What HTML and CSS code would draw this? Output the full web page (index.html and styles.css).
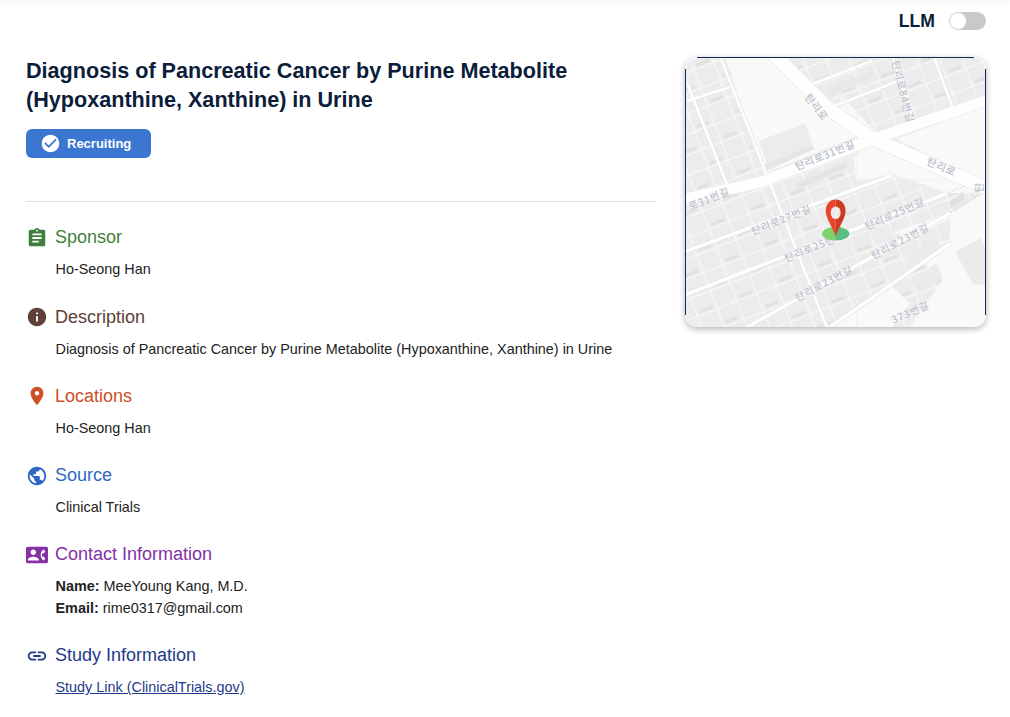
FILE: index.html
```html
<!DOCTYPE html>
<html lang="en">
<head>
<meta charset="utf-8">
<title>Study detail</title>
<link rel="stylesheet" href="styles.css">
</head>
<body>
<div class="top-shadow"></div>
<header class="toolbar">
  <span class="llm-label">LLM</span>
  <span class="switch"><span class="switch-thumb"></span></span>
</header>
<main class="layout">
  <section class="details">
    <h1 class="title">Diagnosis of Pancreatic Cancer by Purine Metabolite (Hypoxanthine, Xanthine) in Urine</h1>
    <div class="badge">
      <svg class="badge-icon" viewBox="0 0 24 24"><path fill="#fff" d="M12 2C6.48 2 2 6.48 2 12s4.48 10 10 10 10-4.48 10-10S17.52 2 12 2zm-2 15l-5-5 1.41-1.41L10 14.17l7.59-7.59L19 8l-9 9z"/></svg>
      <span>Recruiting</span>
    </div>
    <hr class="divider">

    <div class="info">
      <h2 class="info-head c-green"><svg class="icon" viewBox="0 0 24 24"><path d="M19 3h-4.18C14.4 1.84 13.3 1 12 1c-1.3 0-2.4.84-2.82 2H5c-1.1 0-2 .9-2 2v14c0 1.1.9 2 2 2h14c1.1 0 2-.9 2-2V5c0-1.1-.9-2-2-2zm-7 0c.55 0 1 .45 1 1s-.45 1-1 1-1-.45-1-1 .45-1 1-1zm2 14H7v-2h7v2zm3-4H7v-2h10v2zm0-4H7V7h10v2z"/></svg>Sponsor</h2>
      <p class="info-body">Ho-Seong Han</p>
    </div>
    <div class="info">
      <h2 class="info-head c-brown"><svg class="icon" viewBox="0 0 24 24"><path d="M12 2C6.48 2 2 6.48 2 12s4.48 10 10 10 10-4.48 10-10S17.52 2 12 2zm1 15h-2v-6h2v6zm0-8h-2V7h2v2z"/></svg>Description</h2>
      <p class="info-body">Diagnosis of Pancreatic Cancer by Purine Metabolite (Hypoxanthine, Xanthine) in Urine</p>
    </div>
    <div class="info">
      <h2 class="info-head c-orange"><svg class="icon" viewBox="0 0 24 24"><path d="M12 2C8.13 2 5 5.13 5 9c0 5.25 7 13 7 13s7-7.75 7-13c0-3.87-3.13-7-7-7zm0 9.5c-1.38 0-2.5-1.12-2.5-2.5s1.12-2.5 2.5-2.5 2.5 1.12 2.5 2.5-1.12 2.5-2.5 2.5z"/></svg>Locations</h2>
      <p class="info-body">Ho-Seong Han</p>
    </div>
    <div class="info">
      <h2 class="info-head c-blue"><svg class="icon" viewBox="0 0 24 24"><path d="M12 2C6.48 2 2 6.48 2 12s4.48 10 10 10 10-4.48 10-10S17.52 2 12 2zm-1 17.93c-3.95-.49-7-3.85-7-7.93 0-.62.08-1.21.21-1.79L9 15v1c0 1.1.9 2 2 2v1.93zm6.9-2.54c-.26-.81-1-1.39-1.9-1.39h-1v-3c0-.55-.45-1-1-1H8v-2h2c.55 0 1-.45 1-1V7h2c1.1 0 2-.9 2-2v-.41c2.93 1.19 5 4.06 5 7.41 0 2.08-.8 3.97-2.1 5.39z"/></svg>Source</h2>
      <p class="info-body">Clinical Trials</p>
    </div>
    <div class="info">
      <h2 class="info-head c-purple"><svg class="icon" viewBox="0 0 24 24"><path d="M22 3H2C.9 3 0 3.9 0 5v14c0 1.1.9 2 2 2h20c1.1 0 1.99-.9 1.99-2L24 5c0-1.1-.9-2-2-2zM8 6c1.66 0 3 1.34 3 3s-1.34 3-3 3-3-1.34-3-3 1.34-3 3-3zm6 12H2v-1c0-2 4-3.1 6-3.1s6 1.1 6 3.1v1zm3.85-4h1.64L21 16l-1.99 1.99c-1.31-.98-2.28-2.38-2.73-3.99-.18-.64-.28-1.31-.28-2s.1-1.36.28-2c.45-1.62 1.42-3.01 2.73-3.99L21 8l-1.51 2h-1.64c-.22.63-.35 1.3-.35 2s.13 1.37.35 2z"/></svg>Contact Information</h2>
      <p class="info-body"><strong>Name:</strong> MeeYoung Kang, M.D.</p>
      <p class="info-body"><strong>Email:</strong> rime0317@gmail.com</p>
    </div>
    <div class="info">
      <h2 class="info-head c-navy"><svg class="icon" viewBox="0 0 24 24"><path d="M3.9 12c0-1.71 1.39-3.1 3.1-3.1h4V7H7c-2.76 0-5 2.24-5 5s2.24 5 5 5h4v-1.9H7c-1.71 0-3.1-1.39-3.1-3.1zM8 13h8v-2H8v2zm9-6h-4v1.9h4c1.71 0 3.1 1.39 3.1 3.1s-1.39 3.1-3.1 3.1h-4V17h4c2.76 0 5-2.24 5-5s-2.24-5-5-5z"/></svg>Study Information</h2>
      <p class="info-body"><a class="study-link" href="#">Study Link (ClinicalTrials.gov)</a></p>
    </div>
  </section>

  <aside class="map-card">
    <svg class="map" viewBox="15 21 903 810" preserveAspectRatio="none">
      <defs>
        <pattern id="houses" width="128" height="116" patternUnits="userSpaceOnUse" patternTransform="rotate(-21) translate(14 8)">
          <rect width="128" height="116" fill="#ececec"/>
          <path d="M0 1.5H128M0 59H128M1.5 0V116M66 0V116" stroke="#f8f8f7" stroke-width="4" fill="none"/>
          <rect x="12" y="44" width="42" height="10" fill="#e1e1e0"/>
          <rect x="76" y="102" width="40" height="9" fill="#e1e1e0"/>
        </pattern>
      </defs>
      <g class="map-base">
        <rect x="15" y="21" width="903" height="810" fill="url(#houses)"/>
        <!-- open ground -->
        <g fill="#f9f9f7">
          <polygon points="135,21 275,21 440,190 535,255 250,370"/>
          <polygon points="650,265 918,165 918,400"/>
          <polygon points="520,320 570,285 905,425 810,428 640,370 530,392"/>
          <polygon points="815,490 918,425 918,831 690,831 790,690 740,640 810,585"/>
          <polygon points="640,545 810,490 815,500 690,570"/>
          <polygon points="460,831 640,710 690,760 640,831"/>
          <polygon points="15,21 25,21 15,45"/>
          <polygon points="470,170 560,240 590,245 490,140"/>
        </g>
        <!-- large buildings -->
        <polygon points="235,270 375,218 402,296 262,350" fill="#ececeb"/>
        <polygon points="252,342 398,284 402,296 260,360" fill="#e5e5e4"/>
        <polygon points="828,605 905,562 918,590 918,705 880,700" fill="#ebebea"/>
        <polygon points="345,400 495,335 500,350 352,418" fill="#e4e4e3"/>
        <polygon points="440,110 575,60 585,75 450,140" fill="#e8e8e7"/>
        <polygon points="808,455 850,425 858,445 815,475" fill="#e1e1e0"/>
        <polygon points="680,620 760,565 790,595 715,655" fill="#ebebea"/>
        <polygon points="690,700 770,640 790,680 730,725" fill="#ebebea"/>
        <!-- tile seams -->
        <path d="M530 21V831M15 388H918" stroke="#efefed" stroke-width="2" fill="none"/>
        <!-- road casings -->
        <g fill="none" stroke="#e6e6e5" stroke-linecap="round" stroke-linejoin="round">
          <path stroke-width="12" d="M120 21L440 831M20 100L140 405M20 150L145 110M395 100L575 30M465 165L645 95M640 21L705 210M765 21L820 170"/>
          <path stroke-width="14" d="M15 603L635 376M15 733L800 430M200 831L810 490M450 831L812 580"/>
          <path stroke-width="36" d="M15 445L240 395L560 272L918 150"/>
          <path stroke-width="44" d="M285 15L440 170L570 260L918 412"/>
        </g>
        <!-- road fill -->
        <g fill="none" stroke="#fefefe" stroke-linecap="round" stroke-linejoin="round">
          <path stroke-width="8" d="M120 21L440 831M20 100L140 405M20 150L145 110M395 100L575 30M465 165L645 95M640 21L705 210M765 21L820 170"/>
          <path stroke-width="10" d="M15 603L635 376M15 733L800 430M200 831L810 490M450 831L812 580"/>
          <path stroke-width="33" d="M15 445L240 395L560 272L918 150"/>
          <path stroke-width="41" d="M285 15L440 170L570 260L918 412"/>
        </g>
        <path stroke="#dcdcdb" stroke-width="5" stroke-linecap="round" stroke-dasharray="1 11" fill="none" d="M810 425L860 405M815 485L915 425"/>
      </g>
      <!-- street labels -->
      <g class="map-labels">
        <text transform="translate(372 140) rotate(52)">탄리로</text>
        <text transform="translate(740 342) rotate(22)">탄리로</text>
        <text transform="translate(350 360) rotate(-22)">탄리로31번길</text>
        <text transform="translate(28 480) rotate(-22)">로31번길</text>
        <text transform="translate(218 555) rotate(-22)">탄리로27번길</text>
        <text transform="translate(562 540) rotate(-24)">탄리로25번길</text>
        <text transform="translate(318 636) rotate(-22)">탄리로25번</text>
        <text transform="translate(582 628) rotate(-28)">탄리로23번길</text>
        <text transform="translate(352 755) rotate(-28)">탄리로23번길</text>
        <text transform="translate(642 822) rotate(-24)">373번길</text>
        <text transform="translate(636 32) rotate(76)">탄리로84번길</text>
        <text transform="translate(912 425) rotate(-90)">탄</text>
      </g>
      <!-- pin -->
      <ellipse cx="467" cy="550" rx="41" ry="20" fill="#7ed36c"/>
      <path d="M467 530a41 20 0 0 1 0 40z" fill="#5cbd82"/>
      <path d="M467 447C450 447 437 461 437 481C437 505 458 530 467 559z" fill="#e8452a"/>
      <path d="M467 447C484 447 497 461 497 481C497 505 476 530 467 559z" fill="#d03a22"/>
      <ellipse cx="467" cy="487" rx="15" ry="19" fill="#f1ecec"/>
    </svg>
  </aside>
</main>
</body>
</html>
```
FILE: styles.css
```css
* { box-sizing: border-box; }
html, body { margin: 0; padding: 0; background: #fff; }
body {
  font-family: "Liberation Sans", Arial, sans-serif;
  color: #222;
  overflow: hidden;
  height: 717px;
}
.top-shadow {
  height: 0;
  box-shadow: 0 0 7px 1px rgba(0, 0, 0, 0.13);
}
.toolbar {
  display: flex;
  justify-content: flex-end;
  align-items: center;
  gap: 15px;
  height: 42px;
  padding-right: 24px;
}
.llm-label {
  font-size: 17.6px;
  font-weight: 700;
  color: #0b1d39;
}
.switch {
  display: block;
  width: 36px;
  height: 18px;
  border-radius: 9px;
  background: #c9c9c9;
}
.switch-thumb {
  display: block;
  width: 16px;
  height: 16px;
  margin-top: 1px;
  border-radius: 50%;
  background: #fff;
  box-shadow: 0 0 0 1px #d0d0d0;
}
.layout {
  display: flex;
  align-items: flex-start;
  gap: 29px;
  padding: 0 24px 0 26px;
}
.details { width: 630px; flex: none; }
.title {
  margin: 14px 0 0;
  font-size: 21.6px;
  line-height: 29px;
  font-weight: 700;
  color: #0b1d39;
}
.badge {
  display: inline-flex;
  align-items: center;
  gap: 6px;
  width: 125px;
  height: 29px;
  margin-top: 15px;
  padding-left: 14px;
  border-radius: 6px;
  background: #3b76d1;
  color: #fff;
  font-size: 13px;
  font-weight: 700;
}
.badge-icon { width: 21px; height: 21px; flex: none; }
.divider {
  height: 1px;
  margin: 43px 0 22.4px;
  border: 0;
  background: #e0e0e0;
}
.info { margin-bottom: 22.5px; }
.info-head {
  display: flex;
  align-items: center;
  gap: 7px;
  margin: 0 0 8px;
  font-size: 18px;
  line-height: 27px;
  font-weight: 400;
}
.icon { width: 22px; height: 22px; flex: none; fill: currentColor; }
.info-body {
  margin: 0 0 0 29.5px;
  font-size: 14.4px;
  line-height: 21.7px;
  color: #222;
}
.info-body strong { font-weight: 700; }
.c-green { color: #3f7f3b; }
.c-brown { color: #5d4037; }
.c-orange { color: #cc4f26; }
.c-blue { color: #2f68c4; }
.c-purple { color: #8431a6; }
.c-navy { color: #1e3a8a; }
.study-link { color: #1e3a8a; text-decoration: underline; }
.map-card {
  width: 301px;
  height: 270px;
  flex: none;
  margin-top: 15px;
  border-radius: 12px;
  overflow: hidden;
  padding: 1px 1px 0;
  background-color: #fff;
  background-image:
    linear-gradient(#0f2a55, #0f2a55),
    linear-gradient(#0f2a55, #0f2a55),
    linear-gradient(#0f2a55, #0f2a55);
  background-repeat: no-repeat;
  background-size: 277px 1px, 1px 246px, 1px 246px;
  background-position: center top, left center, right center;
  box-shadow: 0 2px 6px rgba(0, 0, 0, 0.3);
}
.map {
  display: block;
  width: 100%;
  height: 100%;
  border-radius: 11px;
}
.map-base { filter: blur(0.7px); }
.map-labels text {
  font-family: "Noto Sans CJK KR", sans-serif;
  font-size: 31px;
  font-weight: 500;
  fill: #bac0cb;
  stroke: #fafafa;
  stroke-width: 3px;
  paint-order: stroke;
  letter-spacing: 2px;
}
```
